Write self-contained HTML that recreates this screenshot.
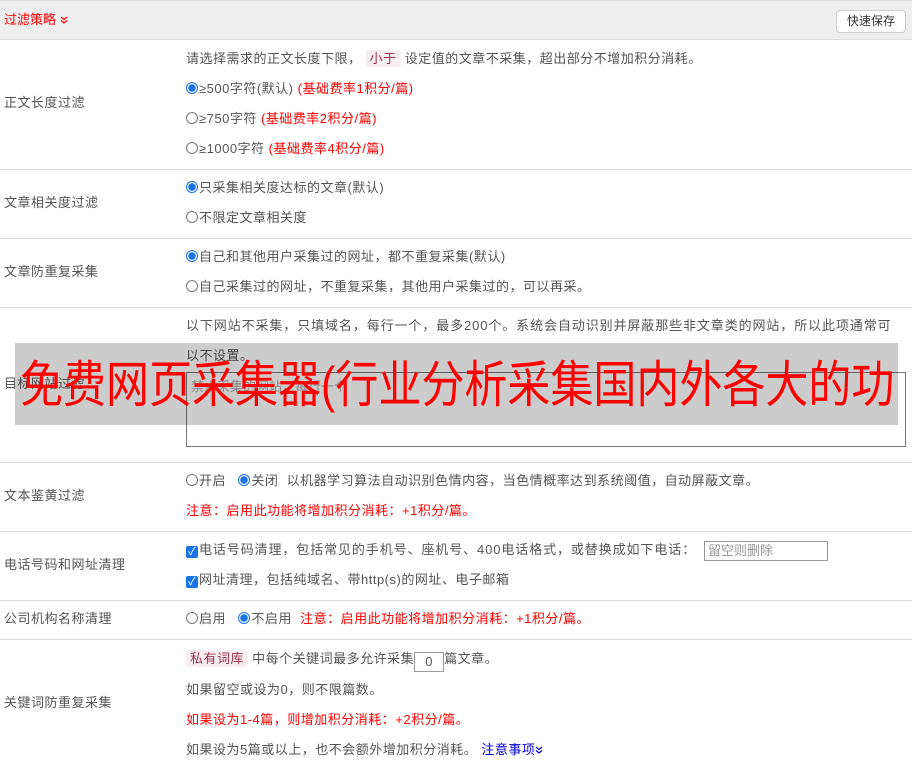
<!DOCTYPE html>
<html><head><meta charset="utf-8"><style>
*{margin:0;padding:0;box-sizing:border-box}
body{width:912px;height:768px;overflow:hidden;background:#fff;position:relative;font-family:"Liberation Sans","Noto Sans CJK SC",sans-serif;font-size:13px;color:#555}
.t{position:absolute;white-space:nowrap;line-height:16px;letter-spacing:0.5px}
.r{color:#f00}
.hl{position:absolute;left:0;width:912px;height:1px;background:#ddd}
.rad{display:inline-block;width:12px;height:12px;border:1px solid #777;border-radius:50%;vertical-align:-1px;margin-right:1px;background:#fff}
.rad.on{border-color:#1a73e8;background:radial-gradient(circle,#1a73e8 3.5px,#fff 4px)}
.cb{display:inline-block;width:12px;height:12px;background:#1a73e8;border-radius:2px;vertical-align:-1px;margin-right:1px;color:#fff;font-size:11px;line-height:12px;text-align:center;letter-spacing:0}
.tag{background:#f7eef0;color:#a03050;padding:1px 4px;border-radius:3px}
.dv{display:inline-block;width:8px;height:8px;vertical-align:0}
</style></head><body>
<div style="position:absolute;left:0;top:0;width:912px;height:40px;background:#eee;border-top:1px solid #ddd;border-bottom:1px solid #ddd"></div>
<div class="t r" style="left:4px;top:12px;letter-spacing:0">过滤策略 <svg class="dv" viewBox="0 0 8 8"><path d="M1 1l3 2.5L7 1M1 4.5l3 2.5L7 4.5" fill="none" stroke="#f00" stroke-width="1.2"/></svg></div>
<div style="position:absolute;left:836px;top:10px;width:70px;height:23px;background:#fff;border:1px solid #ccc;border-radius:4px;font-size:12px;color:#333;text-align:center;line-height:21px">快速保存</div>

<div class="t" style="left:4px;top:95px">正文长度过滤</div>
<div class="t" style="left:186px;top:51px">请选择需求的正文长度下限， <span class="tag">小于</span> 设定值的文章不采集，超出部分不增加积分消耗。</div>
<div class="t" style="left:186px;top:81px"><span class="rad on"></span>≥500字符(默认) <span class="r">(基础费率1积分/篇)</span></div>
<div class="t" style="left:186px;top:111px"><span class="rad"></span>≥750字符 <span class="r">(基础费率2积分/篇)</span></div>
<div class="t" style="left:186px;top:141px"><span class="rad"></span>≥1000字符 <span class="r">(基础费率4积分/篇)</span></div>
<div class="hl" style="top:169px"></div>

<div class="t" style="left:4px;top:195px">文章相关度过滤</div>
<div class="t" style="left:186px;top:180px"><span class="rad on"></span>只采集相关度达标的文章(默认)</div>
<div class="t" style="left:186px;top:210px"><span class="rad"></span>不限定文章相关度</div>
<div class="hl" style="top:238px"></div>

<div class="t" style="left:4px;top:264px">文章防重复采集</div>
<div class="t" style="left:186px;top:249px"><span class="rad on"></span>自己和其他用户采集过的网址，都不重复采集(默认)</div>
<div class="t" style="left:186px;top:279px"><span class="rad"></span>自己采集过的网址，不重复采集，其他用户采集过的，可以再采。</div>
<div class="hl" style="top:307px"></div>

<div class="t" style="left:4px;top:376px">目标网站过滤</div>
<div class="t" style="left:186px;top:318px;letter-spacing:0.9px">以下网站不采集，只填域名，每行一个，最多200个。系统会自动识别并屏蔽那些非文章类的网站，所以此项通常可</div>
<div class="t" style="left:186px;top:348px">以不设置。</div>
<div style="position:absolute;left:186px;top:372px;width:720px;height:75px;border:1px solid #777;background:#fff;padding:3px 4px;color:#aaa;font-size:13px">禁止采集的网站，每行一个</div>
<div class="hl" style="top:462px"></div>

<div class="t" style="left:4px;top:488px">文本鉴黄过滤</div>
<div class="t" style="left:186px;top:473px"><span class="rad"></span>开启 &nbsp;&nbsp;<span class="rad on"></span>关闭 &nbsp;以机器学习算法自动识别色情内容，当色情概率达到系统阈值，自动屏蔽文章。</div>
<div class="t r" style="left:186px;top:503px">注意：启用此功能将增加积分消耗：+1积分/篇。</div>
<div class="hl" style="top:531px"></div>

<div class="t" style="left:4px;top:557px">电话号码和网址清理</div>
<div class="t" style="left:186px;top:542px;letter-spacing:0.9px"><span class="cb">✓</span>电话号码清理，包括常见的手机号、座机号、400电话格式，或替换成如下电话：</div>
<div style="position:absolute;left:704px;top:541px;width:124px;height:20px;border:1px solid #999;color:#999;padding-left:3px;line-height:18px">留空则删除</div>
<div class="t" style="left:186px;top:572px"><span class="cb">✓</span>网址清理，包括纯域名、带http(s)的网址、电子邮箱</div>
<div class="hl" style="top:600px"></div>

<div class="t" style="left:4px;top:611px">公司机构名称清理</div>
<div class="t" style="left:186px;top:611px"><span class="rad"></span>启用 &nbsp;&nbsp;<span class="rad on"></span>不启用 &nbsp;<span class="r">注意：启用此功能将增加积分消耗：+1积分/篇。</span></div>
<div class="hl" style="top:639px"></div>

<div class="t" style="left:4px;top:695px">关键词防重复采集</div>
<div class="t" style="left:186px;top:651px"><span class="tag">私有词库</span> 中每个关键词最多允许采集<span style="display:inline-block;width:30px;height:20px;border:1px solid #999;text-align:center;line-height:18px;vertical-align:-3px">0</span>篇文章。</div>
<div class="t" style="left:186px;top:682px">如果留空或设为0，则不限篇数。</div>
<div class="t r" style="left:186px;top:712px">如果设为1-4篇，则增加积分消耗：+2积分/篇。</div>
<div class="t" style="left:186px;top:742px">如果设为5篇或以上，也不会额外增加积分消耗。 <span style="color:#00c">注意事项<svg class="dv" viewBox="0 0 8 8"><path d="M1 1l3 2.5L7 1M1 4.5l3 2.5L7 4.5" fill="none" stroke="#00c" stroke-width="1.2"/></svg></span></div>

<div style="position:absolute;left:15px;top:343px;width:883px;height:82px;background:rgba(0,0,0,0.2)"></div>
<div style="position:absolute;left:20px;top:356px;white-space:nowrap;font-size:50px;line-height:58px;color:#f00;transform:scaleX(0.86);transform-origin:0 0">免费网页采集器(行业分析采集国内外各大的功</div>
</body></html>
